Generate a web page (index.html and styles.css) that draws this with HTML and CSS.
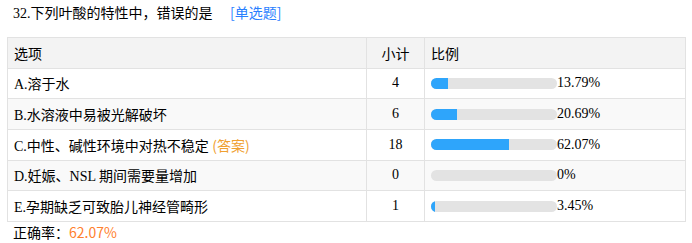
FILE: index.html
```html
<!DOCTYPE html>
<html lang="zh">
<head>
<meta charset="utf-8">
<link rel="stylesheet" href="styles.css">
</head>
<body>
<div class="q">
  <div class="title">32.下列叶酸的特性中，错误的是 <span class="type">[单选题]</span></div>
  <table class="stats">
    <colgroup><col class="c-opt"><col class="c-num"><col class="c-pct"></colgroup>
    <thead>
      <tr><th>选项</th><th class="num">小计</th><th>比例</th></tr>
    </thead>
    <tbody>
      <tr><td>A.溶于水</td><td class="num">4</td><td><div class="pct"><div class="bar"><div class="fill" style="width:13.79%"></div></div><span>13.79%</span></div></td></tr>
      <tr class="alt"><td>B.水溶液中易被光解破坏</td><td class="num">6</td><td><div class="pct"><div class="bar"><div class="fill" style="width:20.69%"></div></div><span>20.69%</span></div></td></tr>
      <tr><td>C.中性、碱性环境中对热不稳定 <span class="ans">(答案)</span></td><td class="num">18</td><td><div class="pct"><div class="bar"><div class="fill" style="width:62.07%"></div></div><span>62.07%</span></div></td></tr>
      <tr class="alt"><td>D.妊娠、NSL 期间需要量增加</td><td class="num">0</td><td><div class="pct"><div class="bar"><div class="fill" style="width:0%"></div></div><span>0%</span></div></td></tr>
      <tr><td>E.孕期缺乏可致胎儿神经管畸形</td><td class="num">1</td><td><div class="pct"><div class="bar"><div class="fill" style="width:3.45%"></div></div><span>3.45%</span></div></td></tr>
    </tbody>
  </table>
  <div class="rate">正确率：<span class="rate-val">62.07%</span></div>
</div>
</body>
</html>
```
FILE: styles.css
```css
html, body {
  margin: 0;
  padding: 0;
  background: #fff;
}
body {
  font-family: "Liberation Serif", "Noto Sans CJK SC", serif;
  font-size: 14px;
  color: #000;
}
.q {
  padding: 2px 8px 0 7px;
}
.title {
  height: 22px;
  line-height: 20px;
  padding-left: 6px;
  margin-bottom: 13px;
}
.type {
  color: #2a7fff;
  margin-left: 14px;
  font-family: "Noto Sans CJK SC", sans-serif;
}
.stats {
  border-collapse: collapse;
  table-layout: fixed;
  width: 678px;
}
.c-opt { width: 359px; }
.c-num { width: 58px; }
.c-pct { width: 261px; }
.stats th, .stats td {
  border: 1px solid #e2e2e2;
  height: 29.67px;
  padding: 0 0 0 6px;
  text-align: left;
  font-weight: normal;
  white-space: nowrap;
}
.stats thead th {
  background: #f3f3f3;
}
.stats th.num, .stats td.num { text-align: center; padding: 0; }
.stats tr.alt td { background: #f9f9f9; }
.ans {
  color: #f0a030;
  font-family: "Noto Sans CJK SC", sans-serif;
}
.pct {
  display: flex;
  align-items: center;
}
.bar {
  width: 126px;
  height: 11px;
  background: #e3e3e3;
  border-radius: 6px;
  overflow: hidden;
  flex: none;
}
.fill {
  height: 100%;
  background: #2ea5fb;
}
.rate {
  padding-left: 6px;
  line-height: 20px;
  font-family: "Noto Sans CJK SC", sans-serif;
}
.rate-val {
  color: #ff7f2e;
}
```
